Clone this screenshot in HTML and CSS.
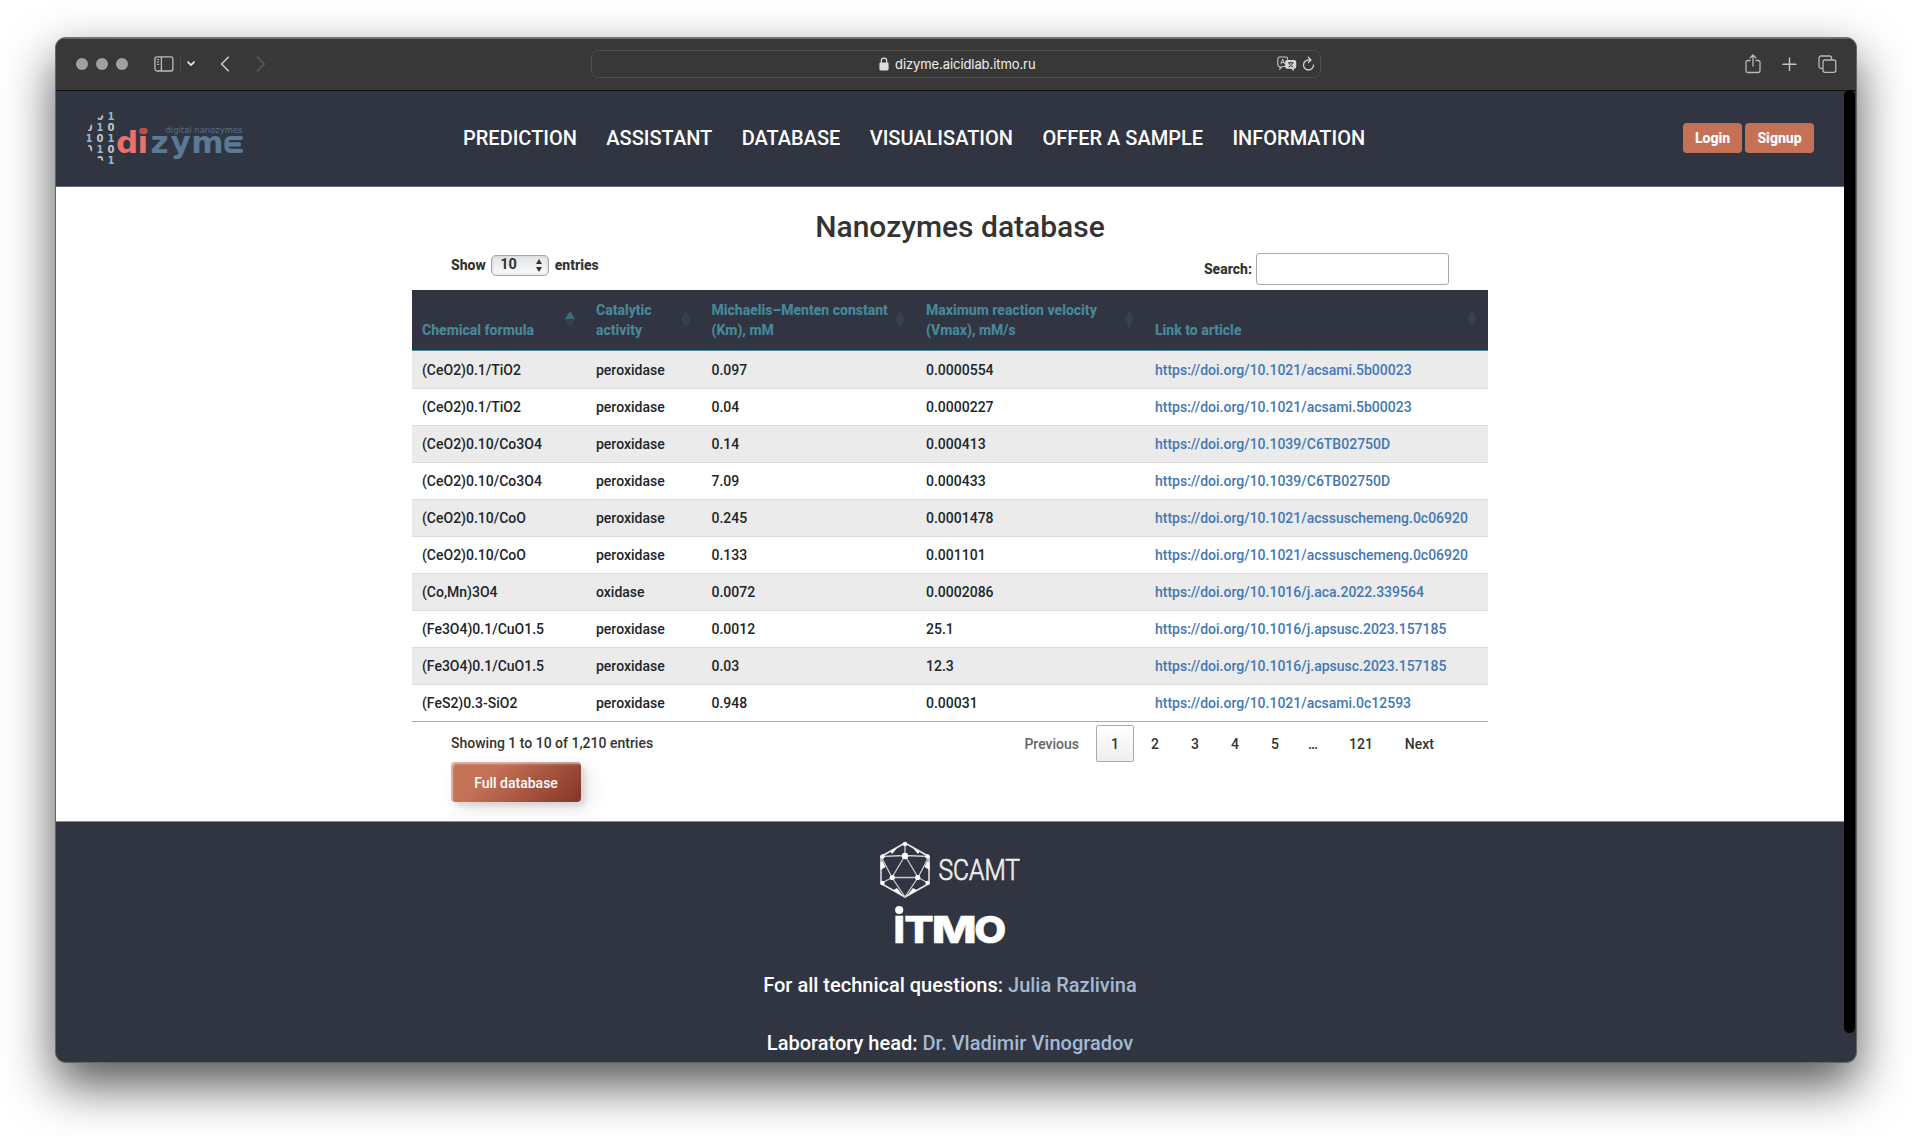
FILE: index.html
```html
<!DOCTYPE html>
<html lang="en">
<head>
<meta charset="utf-8">
<title>Nanozymes database</title>
<link rel="stylesheet" href="styles.css">
</head>
<body>
<div class="window">
  <div class="toolbar">
    <div class="tools-left">
      <span class="dots"><i></i><i></i><i></i></span>
      <svg class="ic-side" width="20" height="16" viewBox="0 0 20 16" fill="none" stroke="#bdbdbd" stroke-width="1.3"><rect x=".9" y=".8" width="18" height="14.2" rx="2"/><path d="M7.4 1v14"/><path d="M2.8 3.6h2.4M2.8 6h2.4M2.8 8.400h2.4" stroke-width="1"/></svg>
      <span class="sep"></span>
      <svg class="ic-down" width="8" height="6" viewBox="0 0 8 6" fill="none" stroke="#e6e6e6" stroke-width="1.7" stroke-linecap="round" stroke-linejoin="round"><path d="M1 1.200l3 3 3-3"/></svg>
      <svg class="ic-back" width="10" height="16" viewBox="0 0 10 16" fill="none" stroke="#c9c9c9" stroke-width="1.600" stroke-linecap="round" stroke-linejoin="round"><path d="M8.300 1.200L1.500 8l6.800 6.800"/></svg>
      <svg class="ic-fwd" width="10" height="16" viewBox="0 0 10 16" fill="none" stroke="#5c5c5c" stroke-width="1.600" stroke-linecap="round" stroke-linejoin="round"><path d="M1.500 1.200L8.300 8l-6.800 6.800"/></svg>
    </div>
    <div class="address">
      <span class="url">
        <svg width="10" height="14" viewBox="0 0 10 14"><rect x=".4" y="5.400" width="9.200" height="8" rx="1.400" fill="#dedede"/><path d="M2.300 6V3.800a2.700 2.700 0 0 1 5.400 0V6" fill="none" stroke="#dedede" stroke-width="1.200"/></svg>
        <span class="host">dizyme.aicidlab.itmo.ru</span>
      </span>
      <svg class="ic-trans" width="20" height="16" viewBox="0 0 20 16"><path d="M9 10.500H5.200L3 13v-2.500H2.600A1.800 1.800 0 0 1 .8 8.700V2.800A1.800 1.800 0 0 1 2.600 1h6.200a1.800 1.800 0 0 1 1.800 1.800v1" fill="none" stroke="#c8c8c8" stroke-width="1.100"/><path d="M3.700 8.200l2-5.200 2 5.200M4.400 6.500h2.600" fill="none" stroke="#c8c8c8" stroke-width="1"/><path d="M10.200 4h7a2 2 0 0 1 2 2v4.800a2 2 0 0 1-2 2h-.5v2.400l-2.500-2.400h-4a2 2 0 0 1-2-2V6a2 2 0 0 1 2-2z" fill="#dcdcdc"/><path d="M11 6.800h5.600M13.800 5.500v1.300M15.600 6.800c-.5 2-2 3.500-4.200 4.200M12 6.800c.5 2 2 3.500 4.200 4.200" fill="none" stroke="#383838" stroke-width="1"/></svg>
      <svg class="ic-reload" width="13" height="16" viewBox="0 0 13 16" fill="none" stroke="#cfcfcf" stroke-width="1.300" stroke-linecap="round" stroke-linejoin="round"><path d="M11.500 9a5 5 0 1 1-5-5h2"/><path d="M6.300 1.200L9 4 6.300 6.600"/></svg>
    </div>
    <div class="tools-right">
      <svg width="16" height="20" viewBox="0 0 16 20" fill="none" stroke="#b9b9b9" stroke-width="1.300" stroke-linecap="round" stroke-linejoin="round"><path d="M5 6.500H2.700A1.700 1.700 0 0 0 1 8.200v8.600a1.700 1.700 0 0 0 1.700 1.700h10.600a1.700 1.700 0 0 0 1.700-1.700V8.200a1.700 1.700 0 0 0-1.700-1.700H11"/><path d="M8 12V1.200M5.200 3.800L8 1l2.800 2.800"/></svg>
      <svg width="15" height="20" viewBox="0 0 15 20" fill="none" stroke="#c4c4c4" stroke-width="1.400" stroke-linecap="round"><path d="M7.500 4v12.500M1 10.300h13"/></svg>
      <svg width="19" height="20" viewBox="0 0 19 20" fill="none" stroke="#b9b9b9" stroke-width="1.300"><path d="M4.800 14.300H3A2 2 0 0 1 1 12.300V4a2 2 0 0 1 2-2h8.500a2 2 0 0 1 2 2v1.800"/><rect x="5" y="6" width="12.800" height="12.300" rx="2"/></svg>
    </div>
  </div>

  <div class="page">
    <header class="header">
      <svg class="logo" width="162" height="62" viewBox="0 0 162 62">
        <defs><clipPath id="disc"><ellipse cx="38" cy="31" rx="36.500" ry="27.500"/></clipPath></defs>
        <ellipse cx="38" cy="31" rx="35.500" ry="29" fill="#2f3642"/>
        <g class="bits" clip-path="url(#disc)">
          <text x="11.500" y="13">0</text><text x="22.500" y="13" class="one">1</text>
          <text x=".5" y="24">0</text><text x="11.500" y="24" class="one">1</text><text x="22.500" y="24">0</text>
          <text x=".5" y="35" class="one">1</text><text x="11.500" y="35">0</text><text x="22.500" y="35" class="one">1</text>
          <text x=".5" y="46">0</text><text x="11.500" y="46" class="one">1</text><text x="22.500" y="46">0</text>
          <text x="11.500" y="57">0</text><text x="22.500" y="57" class="one">1</text>
        </g>
        <text class="mark red" x="31 52.500" y="45.700">dı</text>
        <ellipse cx="58.300" cy="24" rx="4.200" ry="3.200" fill="#b9504f"/>
        <text class="mark blue" x="65.500 85.500 106.300" y="45.700">zym</text>
        <path class="ee" d="M156 31h-10q-4.500 0-4.500 4.500v4q0 4.300 4.500 4.300h10M142 37.400h12"/>
        <text class="tag" x="80.500" y="26" textLength="77" lengthAdjust="spacingAndGlyphs">digital nanozymes</text>
      </svg>
      <nav class="nav">
        <a>PREDICTION</a><a>ASSISTANT</a><a>DATABASE</a><a>VISUALISATION</a><a>OFFER A SAMPLE</a><a>INFORMATION</a>
      </nav>
      <div class="auth"><a class="btn login">Login</a><a class="btn signup">Signup</a></div>
    </header>

    <main class="main">
      <h1>Nanozymes database</h1>
      <div class="controls">
        <div class="length">Show <span class="select">10<svg width="6" height="13" viewBox="0 0 6 13" fill="#333"><path d="M0 5l3-5 3 5zM0 8l3 5 3-5z"/></svg></span> entries</div>
        <label class="search">Search:<input type="text"></label>
      </div>
      <table>
        <colgroup><col class="c1"><col class="c2"><col class="c3"><col class="c4"><col class="c5"></colgroup>
        <thead><tr>
          <th class="asc">Chemical formula</th><th>Catalytic<br>activity</th><th>Michaelis–Menten constant<br>(Km), mM</th><th>Maximum reaction velocity<br>(Vmax), mM/s</th><th>Link to article</th>
        </tr></thead>
        <tbody>
          <tr><td>(CeO2)0.1/TiO2</td><td>peroxidase</td><td>0.097</td><td>0.0000554</td><td><a>https://doi.org/10.1021/acsami.5b00023</a></td></tr>
          <tr><td>(CeO2)0.1/TiO2</td><td>peroxidase</td><td>0.04</td><td>0.0000227</td><td><a>https://doi.org/10.1021/acsami.5b00023</a></td></tr>
          <tr><td>(CeO2)0.10/Co3O4</td><td>peroxidase</td><td>0.14</td><td>0.000413</td><td><a>https://doi.org/10.1039/C6TB02750D</a></td></tr>
          <tr><td>(CeO2)0.10/Co3O4</td><td>peroxidase</td><td>7.09</td><td>0.000433</td><td><a>https://doi.org/10.1039/C6TB02750D</a></td></tr>
          <tr><td>(CeO2)0.10/CoO</td><td>peroxidase</td><td>0.245</td><td>0.0001478</td><td><a>https://doi.org/10.1021/acssuschemeng.0c06920</a></td></tr>
          <tr><td>(CeO2)0.10/CoO</td><td>peroxidase</td><td>0.133</td><td>0.001101</td><td><a>https://doi.org/10.1021/acssuschemeng.0c06920</a></td></tr>
          <tr><td>(Co,Mn)3O4</td><td>oxidase</td><td>0.0072</td><td>0.0002086</td><td><a>https://doi.org/10.1016/j.aca.2022.339564</a></td></tr>
          <tr><td>(Fe3O4)0.1/CuO1.5</td><td>peroxidase</td><td>0.0012</td><td>25.1</td><td><a>https://doi.org/10.1016/j.apsusc.2023.157185</a></td></tr>
          <tr><td>(Fe3O4)0.1/CuO1.5</td><td>peroxidase</td><td>0.03</td><td>12.3</td><td><a>https://doi.org/10.1016/j.apsusc.2023.157185</a></td></tr>
          <tr><td>(FeS2)0.3-SiO2</td><td>peroxidase</td><td>0.948</td><td>0.00031</td><td><a>https://doi.org/10.1021/acsami.0c12593</a></td></tr>
        </tbody>
      </table>
      <div class="below">
        <div>
          <div class="info">Showing 1 to 10 of 1,210 entries</div>
          <a class="full">Full database</a>
        </div>
        <div class="pager"><a class="off">Previous</a><a class="cur">1</a><a>2</a><a>3</a><a>4</a><a>5</a><span>…</span><a>121</a><a>Next</a></div>
      </div>
    </main>

    <footer class="footer">
      <svg class="scamt" width="146" height="58" viewBox="0 0 146 58">
        <g fill="none" stroke="#c9ccd2" stroke-width="1.300" stroke-linejoin="round">
          <path d="M26 2L50 15.500v27L26 56 2 42.500v-27z" stroke="#e6e8eb" stroke-width="1.500"/>
          <path d="M26 14.500L39 36.500H13zM26 2v12.500M2 15.500l24-1L50 15.500M2 15.500l11 21L2 42.500M50 15.500l-11 21L50 42.500M13 36.500L26 56l13-19.500"/>
        </g>
        <g fill="#fff"><circle cx="26" cy="3" r="2.200"/><circle cx="3.500" cy="15.500" r="2.200"/><circle cx="48.500" cy="15.500" r="2.200"/><circle cx="3.500" cy="42" r="2.200"/><circle cx="48.500" cy="42" r="2.200"/><circle cx="26" cy="15" r="3.200"/><circle cx="13.300" cy="36.500" r="2.600"/><circle cx="38.700" cy="36.500" r="2.600"/><path d="M1.500 22l2-2 3 6-5 3zM50.500 22l-2-2-3 6 5 3zM11.500 10.500l7-4-5.500 6.500zM40.500 10.500l-7-4 5.500 6.500zM14.500 49l3.500-2 6.500 8.500zM37.500 49l-3.500-2-6.500 8.500z"/></g>
        <text class="scamt-name" x="59.500" y="39" textLength="81.500" lengthAdjust="spacingAndGlyphs">SCAMT</text>
      </svg>
      <svg class="itmo" width="116" height="46" viewBox="-2 0 116 46">
        <circle cx="5.200" cy="4" r="4.100" fill="#fff"/>
        <text x="-.5" y="37" textLength="11.500" lengthAdjust="spacingAndGlyphs">I</text><text x="10.200" y="37" textLength="29.500" lengthAdjust="spacingAndGlyphs">T</text><text x="37.800" y="37" textLength="45" lengthAdjust="spacingAndGlyphs">M</text><text x="80.200" y="37" textLength="32" lengthAdjust="spacingAndGlyphs">O</text>
      </svg>
      <p class="tech">For all technical questions: <a>Julia Razlivina</a></p>
      <p class="head">Laboratory head: <a>Dr. Vladimir Vinogradov</a></p>
    </footer>
  </div>
  <div class="scrollbar"></div>
</div>
</body>
</html>
```
FILE: styles.css
```css
* { box-sizing: border-box; }
body { margin: 0; height: 1136px; overflow: hidden; background: #fff; font: 500 14px/20px Roboto, sans-serif; color: #333; padding: 37px 55px; }
.window { position: relative; width: 1802px; height: 1026px; border: 1px solid #646568; border-top-color: #777; border-radius: 11px; background: #313541; overflow: hidden; box-shadow: 0 22px 50px rgba(0, 0, 0, .67); }

.toolbar { height: 53px; background: #383838; border-top: 1px solid #6b6b6b; border-bottom: 1px solid #111216; display: flex; align-items: center; padding: 0 19px 2px 20px; }
.tools-left { width: 515px; display: flex; align-items: center; }
.dots { display: flex; gap: 8px; margin-right: 26px; }
.dots i { width: 12px; height: 12px; border-radius: 50%; background: #a0a09f; }
.sep { width: 1px; height: 18px; background: #4b4b4b; margin: 0 7px 0 6px; }
.ic-down { margin-left: -1px; }
.ic-back { margin-left: 25px; }
.ic-fwd { margin-left: 26px; }
.address { width: 730px; height: 28px; border: 1px solid #505050; border-radius: 7px; display: flex; align-items: center; padding-right: 5px; }
.url { flex: 1; display: flex; align-items: center; justify-content: flex-end; gap: 6px; }
.host { font: 400 13px/18px Inter, sans-serif; color: #f0f0f0; width: 140px; white-space: nowrap; letter-spacing: -.08px; }
.ic-trans { margin-left: 242px; }
.ic-reload { margin-left: 5px; }
.tools-right { margin-left: auto; display: flex; gap: 21px; align-items: center; }

.page { width: 1788px; }
.header { height: 96px; background: #313541; border-bottom: 1px solid #6a6d76; display: flex; align-items: center; padding-bottom: 2px; }
.logo { margin-left: 29px; width: 162px; margin-top: 1px; }
.bits text { font: 700 10px "DejaVu Sans", sans-serif; fill: #c4c6c8; }
.bits .one { fill: #94b7d2; }
.mark { font: 700 31px "DejaVu Sans", sans-serif; }
.red { fill: #ef6e68; }
.blue { fill: #5a7a95; }
.ee { fill: none; stroke: #5a7a95; stroke-width: 4.200; stroke-linecap: round; }
.tag { font: 400 8.500px "DejaVu Sans", sans-serif; fill: #54718b; }
.nav { margin-left: 216px; display: flex; gap: 29.400px; font-size: 20px; line-height: 24px; color: #fff; white-space: nowrap; }
.auth { margin-left: auto; margin-right: 30px; display: flex; gap: 3px; }
.btn { height: 30px; border-radius: 4px; background: #c57156; color: #fff; font-weight: 800; line-height: 30px; text-align: center; }
.login { width: 59px; }
.signup { width: 69px; }

.main { height: 634px; background: #fff; padding: 22px 356px 0; }
h1 { margin: 0; padding-left: 20px; font-size: 30px; line-height: 36px; font-weight: 500; text-align: center; color: #333; }
.controls { display: flex; justify-content: space-between; height: 45px; padding: 8px 39px 0; font-weight: 800; }
.length { display: flex; align-items: center; height: 22px; gap: 5.500px; margin-top: 1px; }
.select { width: 58px; height: 21px; border: 1px solid #a5a5a5; border-radius: 5px; background: linear-gradient(#e4e4e4, #fafafa); box-shadow: inset 0 0 3px #ccc; display: flex; align-items: center; justify-content: space-between; padding: 0 6px 0 8px; font-size: 14.500px; font-weight: 700; }
.search { display: flex; align-items: center; height: 32px; gap: 4px; }
input { width: 193px; height: 32px; border: 1px solid #aaa; border-radius: 3px; background: transparent; padding: 5px; }

table { width: 1076px; table-layout: fixed; border-collapse: separate; border-spacing: 0; border-bottom: 1px solid #aaa; }
.c1 { width: 174px; }
.c2 { width: 115.500px; }
.c3 { width: 214.500px; }
.c4 { width: 229px; }
.c5 { width: 343px; }
th { position: relative; height: 61px; padding: 9px 0 10px 10px; background: #313541; border-bottom: 1px solid #47889a; color: #47889a; font-weight: 800; text-align: left; vertical-align: bottom; white-space: nowrap; }
th::before, th::after { content: ""; position: absolute; right: 11px; border: 5px solid transparent; opacity: .15; }
th::before { top: 21px; border-top: 0; border-bottom: 8px solid #47889a; }
th::after { top: 29px; border-bottom: 0; border-top: 9px solid #47889a; }
th.asc::before { opacity: .65; }
td { height: 37px; padding: 0 0 0 10px; border-top: 1px solid #dcdcdc; color: #212529; white-space: nowrap; }
tr:first-child td { border-top-color: #ebebeb; }
tbody tr:nth-child(odd) td { background: #ebebeb; }
td a { color: #4378b5; }

.below { display: flex; justify-content: space-between; padding: 0 39px; }
.info { margin-top: 11px; }
.full { display: block; width: 130px; height: 40px; margin-top: 8.500px; border-radius: 4px; background: linear-gradient(135deg, #c57156 30%, #8a382a 95%); box-shadow: inset 2px 2px 2px rgba(255, 255, 255, .5), 7px 7px 20px rgba(0, 0, 0, .1), 4px 4px 5px rgba(0, 0, 0, .1); color: #fff; line-height: 42px; text-align: center; }
.pager { display: flex; gap: 2px; margin-top: 3px; height: 37px; line-height: 36px; white-space: nowrap; }
.pager a { padding: 0 14px; border: 1px solid transparent; border-radius: 2px; min-width: 38px; text-align: center; }
.pager .off { color: #666; }
.pager .cur { border-color: #aaa; background: linear-gradient(#fff, #eee); }
.pager span { padding: 1px 14px 1px 12px; }

.footer { height: 241px; background: #313541; border-top: 1px solid #8a8d94; display: flex; flex-direction: column; align-items: center; color: #fff; font-size: 20px; line-height: 28px; }
.footer svg { flex: none; overflow: visible; }
.scamt { margin-top: 19px; margin-left: 4px; }
.scamt-name { font: 300 29px Roboto, sans-serif; fill: #eee; stroke: #eee; stroke-width: .7; }
.itmo { margin-top: 7px; }
.itmo text { font: 800 37px Inter, sans-serif; fill: #fff; stroke: #fff; stroke-width: .6; }
p { margin: 0; }
.tech { margin-top: 19px; }
.head { margin-top: 30px; }
.footer a { color: #a3b9d4; }
.scrollbar { position: absolute; right: 1px; top: 52px; width: 11px; height: 943px; border-radius: 6px; background: #000; }
```
